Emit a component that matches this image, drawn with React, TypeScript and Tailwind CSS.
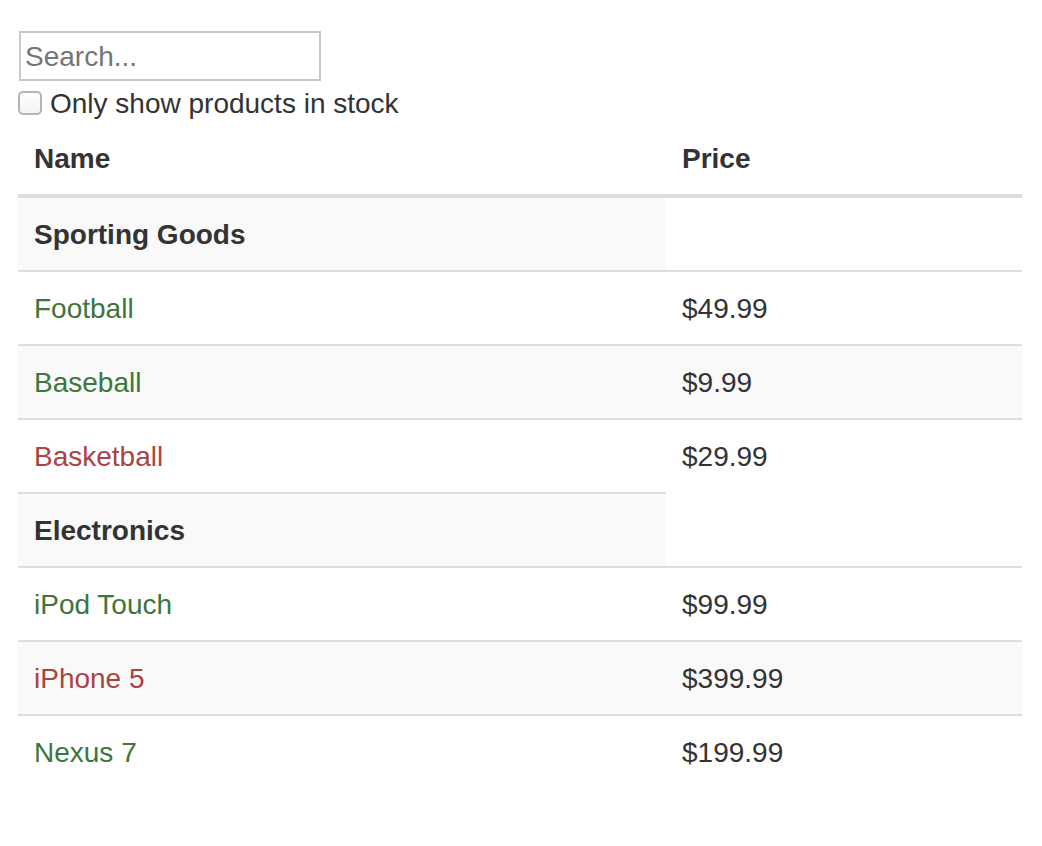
import React from "react";

type Product = {
  category: string;
  price: string;
  stocked: boolean;
  name: string;
};

const PRODUCTS: Product[] = [
  { category: "Sporting Goods", price: "$49.99", stocked: true, name: "Football" },
  { category: "Sporting Goods", price: "$9.99", stocked: true, name: "Baseball" },
  { category: "Sporting Goods", price: "$29.99", stocked: false, name: "Basketball" },
  { category: "Electronics", price: "$99.99", stocked: true, name: "iPod Touch" },
  { category: "Electronics", price: "$399.99", stocked: false, name: "iPhone 5" },
  { category: "Electronics", price: "$199.99", stocked: true, name: "Nexus 7" },
];

type Row =
  | { kind: "category"; label: string }
  | { kind: "product"; product: Product };

function buildRows(products: Product[]): Row[] {
  const rows: Row[] = [];
  let last: string | null = null;
  products.forEach((p) => {
    if (p.category !== last) {
      rows.push({ kind: "category", label: p.category });
      last = p.category;
    }
    rows.push({ kind: "product", product: p });
  });
  return rows;
}

export default function App() {
  const rows = buildRows(PRODUCTS);

  return (
    <div
      className="min-h-[846px] bg-white pt-[31px] pl-[18px] text-[28px] leading-[40px] text-[#333333]"
      style={{ fontFamily: '"Liberation Sans", Arial, sans-serif' }}
    >
      {/* Search bar */}
      <div className="pl-[1px]">
        <input
          type="text"
          placeholder="Search..."
          className="block h-[50px] w-[302px] border-2 border-[#c8c8c8] bg-white pl-[4px] pr-[4px] pt-[2px] text-[28px] text-[#333333] outline-none placeholder:text-[#757575]"
        />
      </div>
      <label className="mt-[2px] flex h-[40px] items-center gap-[8px]">
        <input
          type="checkbox"
          className="h-[24px] w-[24px] appearance-none rounded-[5px] border-2 border-[#b5b5b5] bg-gradient-to-b from-white to-[#f3f3f3]"
        />
        <span className="pt-[2px]">Only show products in stock</span>
      </label>

      {/* Product table */}
      <table className="w-[1004px] border-collapse">
        <thead>
          <tr>
            <th className="w-[648px] border-b-4 border-[#dddddd] px-[16px] pt-[16px] pb-[15px] text-left align-bottom font-bold">
              Name
            </th>
            <th className="border-b-4 border-[#dddddd] px-[16px] pt-[16px] pb-[15px] text-left align-bottom font-bold">
              Price
            </th>
          </tr>
        </thead>
        <tbody>
          {rows.map((row, i) => {
            const striped = i % 2 === 0;
            const bg = striped ? "bg-[#f9f9f9]" : "bg-white";
            const border = i === 0 ? "" : "border-t-2 border-[#dddddd]";
            if (row.kind === "category") {
              return (
                <tr key={row.label}>
                  <th className={`${bg} ${border} px-[16px] pt-[17px] pb-[15px] text-left align-top font-bold`}>
                    {row.label}
                  </th>
                </tr>
              );
            }
            const p = row.product;
            return (
              <tr key={p.name}>
                <td
                  className={`${bg} ${border} px-[16px] pt-[17px] pb-[15px] align-top ${
                    p.stocked ? "text-[#3c763d]" : "text-[#a94442]"
                  }`}
                >
                  {p.name}
                </td>
                <td className={`${bg} ${border} px-[16px] pt-[17px] pb-[15px] align-top`}>
                  {p.price}
                </td>
              </tr>
            );
          })}
        </tbody>
      </table>
    </div>
  );
}
